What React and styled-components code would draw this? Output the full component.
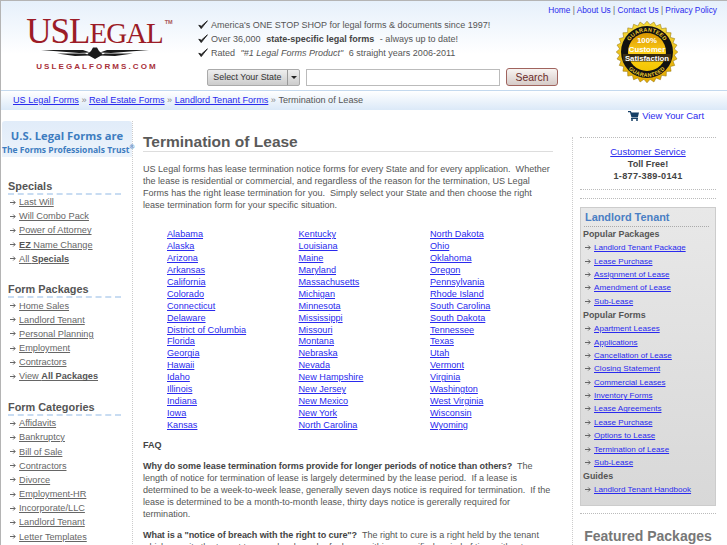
import React from 'react';
import styled, { createGlobalStyle } from 'styled-components';

const states = [
    ['Alabama', 'Alaska', 'Arizona', 'Arkansas', 'California', 'Colorado', 'Connecticut', 'Delaware', 'District of Columbia', 'Florida', 'Georgia', 'Hawaii', 'Idaho', 'Illinois', 'Indiana', 'Iowa', 'Kansas'],
    ['Kentucky', 'Louisiana', 'Maine', 'Maryland', 'Massachusetts', 'Michigan', 'Minnesota', 'Mississippi', 'Missouri', 'Montana', 'Nebraska', 'Nevada', 'New Hampshire', 'New Jersey', 'New Mexico', 'New York', 'North Carolina'],
    ['North Dakota', 'Ohio', 'Oklahoma', 'Oregon', 'Pennsylvania', 'Rhode Island', 'South Carolina', 'South Dakota', 'Tennessee', 'Texas', 'Utah', 'Vermont', 'Virginia', 'Washington', 'West Virginia', 'Wisconsin', 'Wyoming'],
];

const Arrow = () => (
    <svg width="6" height="7" viewBox="0 0 6 7">
        <path d="M0 3.5H5M3.2 1.5L5.2 3.5L3.2 5.5" fill="none" stroke="#666" strokeWidth="1" />
    </svg>
);

const Check = () => (
    <svg width="10" height="10" viewBox="0 0 10 10">
        <path d="M0.8 5.2L3.2 8.6L9.4 0.8L3.4 6.2Z" fill="#222" stroke="#222" strokeWidth="0.9" strokeLinejoin="round" />
    </svg>
);

const Eagle = () => (
    <EagleWrap>
        <svg width="108" height="12" viewBox="0 0 108 12">
            <g fill="#1a1a1a">
                <path d="M0 3H42L49 5.5L38 6Z" />
                <path d="M108 3H66L59 5.5L70 6Z" />
                <path d="M16 6.6L44 6.6L49 8.5L34 9Z" />
                <path d="M92 6.6L64 6.6L59 8.5L74 9Z" />
                <path d="M50 4L52 0.5H56L58 4L62 7.5L54 12L46 7.5Z" />
            </g>
        </svg>
    </EagleWrap>
);

const Seal = () => {
    const points = [];
    for (let i = 0; i < 56; i++) {
        const r = i % 2 === 0 ? 30.8 : 27.5;
        const a = (i / 56) * Math.PI * 2;
        points.push(`${(31 + r * Math.cos(a)).toFixed(1)},${(31 + r * Math.sin(a)).toFixed(1)}`);
    }
    return (
        <svg width="62" height="62" viewBox="0 0 62 62">
            <defs>
                <linearGradient id="gold" x1="0" y1="0" x2="0" y2="1">
                    <stop offset="0" stopColor="#f7dc3c" />
                    <stop offset="1" stopColor="#e3a800" />
                </linearGradient>
                <linearGradient id="inner" x1="0" y1="0" x2="0" y2="1">
                    <stop offset="0" stopColor="#d99400" />
                    <stop offset="0.55" stopColor="#ffd21a" />
                    <stop offset="1" stopColor="#f2c400" />
                </linearGradient>
                <path id="topArc" d="M10.5 31A20.5 20.5 0 0 1 51.5 31" />
                <path id="botArc" d="M6 31A25 25 0 0 0 56 31" />
            </defs>
            <polygon points={points.join(' ')} fill="url(#gold)" stroke="#8a6a00" strokeWidth="0.5" />
            <circle cx="31" cy="31" r="26" fill="#111" />
            <circle cx="31" cy="31" r="19" fill="url(#inner)" />
            <rect x="7" y="33" width="48" height="7.5" fill="#3a2c10" />
            <SealBand><textPath href="#topArc" startOffset="50%">GUARANTEED</textPath></SealBand>
            <SealBand><textPath href="#botArc" startOffset="50%">GUARANTEED</textPath></SealBand>
            <SealText x="31" y="22">100%</SealText>
            <SealText x="31" y="31">Customer</SealText>
            <SealText x="31" y="39.5">Satisfaction</SealText>
        </svg>
    );
};

const Cart = () => (
    <svg width="11" height="10" viewBox="0 0 11 10">
        <path d="M0 0H2.8L3.6 1.5H11L9.8 6.5H3.5L2 1.3H0Z" fill="#163f66" />
        <rect x="3" y="7" width="7" height="1" fill="#163f66" />
        <circle cx="4" cy="9" r="1" fill="#163f66" />
        <circle cx="9" cy="9" r="1" fill="#163f66" />
    </svg>
);

const SideSection = ({ title, items }) => (
    <Section>
        <SectionTitle>{title}</SectionTitle>
        {items.map((item, i) => (
            <SideItem key={i}><Arrow /><SideLink href="#">{item}</SideLink></SideItem>
        ))}
    </Section>
);

const BoxList = ({ title, items }) => (
    <>
        <BoxHeading>{title}</BoxHeading>
        {items.map(item => (
            <BoxItem key={item}><Arrow /><a href="#">{item}</a></BoxItem>
        ))}
    </>
);

const App = () => {
    return (
        <Page>
            <GlobalStyle />
            <Header>
                <Logo>
                    <LogoWord>USL<span>EGAL</span><sup>TM</sup></LogoWord>
                    <Eagle />
                    <LogoUrl>USLEGALFORMS.COM</LogoUrl>
                </Logo>
                <Pitch>
                    <Bullet><Check />America's ONE STOP SHOP for legal forms &amp; documents since 1997!</Bullet>
                    <Bullet><Check />Over 36,000&nbsp;<b>state-specific legal forms</b>&nbsp;- always up to date!</Bullet>
                    <Bullet><Check />Rated&nbsp;<i>"#1 Legal Forms Product"</i>&nbsp;6 straight years 2006-2011</Bullet>
                    <SearchRow>
                        <StateSelect>
                            <span>Select Your State</span>
                            <SelectArrow />
                        </StateSelect>
                        <SearchInput />
                        <SearchButton>Search</SearchButton>
                    </SearchRow>
                </Pitch>
                <HeaderRight>
                    <TopLinks>
                        <a href="#">Home</a> | <a href="#">About Us</a> | <a href="#">Contact Us</a> | <a href="#">Privacy Policy</a>
                    </TopLinks>
                    <SealWrap><Seal /></SealWrap>
                </HeaderRight>
            </Header>
            <Crumbs>
                <a href="#">US Legal Forms</a><Sep>»</Sep>
                <a href="#">Real Estate Forms</a><Sep>»</Sep>
                <a href="#">Landlord Tenant Forms</a><Sep>»</Sep>
                Termination of Lease
            </Crumbs>
            <CartRow><Cart /><a href="#">View Your Cart</a></CartRow>
            <Columns>
                <LeftCol>
                    <Trust>
                        <TrustTop>U.S. Legal Forms are</TrustTop>
                        <TrustBottom>The Forms Professionals Trust<sup>®</sup></TrustBottom>
                    </Trust>
                    <SideSection title="Specials" items={['Last Will', 'Will Combo Pack', 'Power of Attorney', <><b>EZ</b> Name Change</>, <>All <b>Specials</b></>]} />
                    <SideSection title="Form Packages" items={['Home Sales', 'Landlord Tenant', 'Personal Planning', 'Employment', 'Contractors', <>View <b>All Packages</b></>]} />
                    <SideSection title="Form Categories" items={['Affidavits', 'Bankruptcy', 'Bill of Sale', 'Contractors', 'Divorce', 'Employment-HR', 'Incorporate/LLC', 'Landlord Tenant', 'Letter Templates']} />
                </LeftCol>
                <Main>
                    <Title>Termination of Lease</Title>
                    <Para>
                        US Legal forms has lease termination notice forms for every State and for every application.&nbsp; Whether the lease is residential or commercial, and regardless of the reason for the termination, US Legal Forms has the right lease termination for you.&nbsp; Simply select your State and then choose the right lease termination form for your specific situation.
                    </Para>
                    <StateGrid>
                        {states.map((col, i) => (
                            <StateCol key={i}>
                                {col.map(name => <a href="#" key={name}>{name}</a>)}
                            </StateCol>
                        ))}
                    </StateGrid>
                    <Para><b>FAQ</b></Para>
                    <Para>
                        <b>Why do some lease termination forms provide for longer periods of notice than others?</b>&nbsp; The length of notice for termination of lease is largely determined by the lease period.&nbsp; If a lease is determined to be a week-to-week lease, generally seven days notice is required for termination.&nbsp; If the lease is determined to be a month-to-month lease, thirty days notice is gererally required for termination.
                    </Para>
                    <Para>
                        <b>What is a "notice of breach with the right to cure"?</b>&nbsp; The right to cure is a right held by the tenant which permits the tenant to remedy a breach of a lease within a specified period of time without
                    </Para>
                </Main>
                <RightCol>
                    <Service>
                        <a href="#">Customer Service</a>
                        <b>Toll Free!</b>
                        <Phone>1-877-389-0141</Phone>
                    </Service>
                    <Rule />
                    <LinkBox>
                        <BoxTitle>Landlord Tenant</BoxTitle>
                        <BoxList title="Popular Packages" items={['Landlord Tenant Package', 'Lease Purchase', 'Assignment of Lease', 'Amendment of Lease', 'Sub-Lease']} />
                        <BoxList title="Popular Forms" items={['Apartment Leases', 'Applications', 'Cancellation of Lease', 'Closing Statement', 'Commercial Leases', 'Inventory Forms', 'Lease Agreements', 'Lease Purchase', 'Options to Lease', 'Termination of Lease', 'Sub-Lease']} />
                        <BoxList title="Guides" items={['Landlord Tenant Handbook']} />
                    </LinkBox>
                    <Rule />
                    <Featured>Featured Packages</Featured>
                </RightCol>
            </Columns>
        </Page>
    );
};

export default App;

const GlobalStyle = createGlobalStyle`
    html, body {
        margin: 0;
        height: 545px;
        overflow: hidden;
        background: #fff;
    }
    body {
        font-family: 'Liberation Sans', Arial, sans-serif;
        font-size: 9.15px;
        color: #555;
    }
    a {
        color: #2a2aee;
    }
`

const Page = styled.div`
    width: 727px;
    height: 545px;
    overflow: hidden;
    box-sizing: border-box;
    border-left: 1px solid #b4b4b4;
    border-top: 1px solid #b4b4b4;
`

const Header = styled.div`
    display: flex;
    height: 90px;
    box-sizing: border-box;
    border-bottom: 1px solid #c4d9ee;
    background: linear-gradient(#e6f0fb, #fff 60%);
`

const Logo = styled.div`
    width: 197px;
    flex: none;
    display: flex;
    flex-direction: column;
    align-items: center;
    padding: 15px 5px 0 0;
    box-sizing: border-box;
`

const LogoWord = styled.div`
    font-family: 'Liberation Serif', serif;
    font-size: 35px;
    line-height: 31px;
    color: #9c1c27;
    letter-spacing: -1px;
    white-space: nowrap;
    margin: 0 0 -2px 5px;
    span {
        font-size: 29px;
    }
    sup {
        font-family: 'Liberation Sans', sans-serif;
        font-size: 5.5px;
        letter-spacing: 0;
        font-weight: bold;
        line-height: 0;
        vertical-align: 19px;
        color: #a55;
        margin-left: 2px;
    }
`

const EagleWrap = styled.div`
    height: 12px;
    margin-right: 4px;
`

const LogoUrl = styled.div`
    font-size: 8px;
    font-weight: bold;
    line-height: 10px;
    letter-spacing: 2.1px;
    color: #a8303a;
    margin-top: 3px;
    white-space: nowrap;
`

const Pitch = styled.div`
    width: 360px;
    flex: none;
    padding-top: 17px;
    box-sizing: border-box;
`

const Bullet = styled.div`
    display: flex;
    align-items: center;
    height: 14px;
    gap: 3px;
    font-size: 9.02px;
    white-space: nowrap;
    svg {
        flex: none;
    }
    b {
        color: #444;
    }
`

const SearchRow = styled.div`
    display: flex;
    gap: 6px;
    margin-top: 9px;
    margin-left: 9px;
    align-items: flex-start;
`

const StateSelect = styled.div`
    width: 93px;
    height: 17px;
    box-sizing: border-box;
    display: flex;
    align-items: stretch;
    border: 1px solid #aaa;
    border-radius: 2px;
    background: linear-gradient(#eee, #ccc);
    color: #333;
    font-size: 8.9px;
    white-space: nowrap;
    span {
        flex: 1;
        line-height: 15px;
        text-align: center;
        border-right: 1px solid #999;
    }
`

const SelectArrow = styled.i`
    width: 11px;
    position: relative;
    &::after {
        content: '';
        position: absolute;
        left: 3px;
        top: 6px;
        border: 3px solid transparent;
        border-top-color: #222;
        border-bottom: 0;
    }
`

const SearchInput = styled.div`
    width: 195px;
    height: 17px;
    box-sizing: border-box;
    border: 1px solid #bbb;
    background: #fff;
`

const SearchButton = styled.button`
    width: 52px;
    height: 18px;
    margin-top: -1px;
    padding: 0;
    box-sizing: border-box;
    border: 1px solid #a0645e;
    border-radius: 3px;
    background: linear-gradient(#f8f4f2, #d6cbc8);
    color: #6a2a26;
    font-family: 'Liberation Sans', sans-serif;
    font-size: 10.4px;
`

const HeaderRight = styled.div`
    flex: 1;
    min-width: 0;
    display: flex;
    flex-direction: column;
    align-items: flex-end;
`

const TopLinks = styled.div`
    padding: 3px 10px 0 0;
    font-size: 8.3px;
    line-height: 12px;
    white-space: nowrap;
    color: #666;
    a {
        text-decoration: none;
    }
`

const SealWrap = styled.div`
    align-self: flex-start;
    margin: 5px 0 0 58px;
`

const SealBand = styled.text`
    font-size: 5.4px;
    font-weight: bold;
    fill: #f2cd2c;
    text-anchor: middle;
    letter-spacing: 0.3px;
`

const SealText = styled.text`
    font-size: 7.8px;
    font-weight: bold;
    fill: #fff;
    text-anchor: middle;
`

const Crumbs = styled.div`
    height: 19px;
    line-height: 18px;
    padding-left: 12px;
    background: linear-gradient(#fff, #dbe9f8);
    white-space: nowrap;
`

const Sep = styled.span`
    color: #888;
    margin: 0 2.5px;
`

const CartRow = styled.div`
    display: flex;
    align-items: center;
    justify-content: flex-end;
    gap: 3px;
    height: 11px;
    padding-right: 23px;
    font-size: 9.4px;
    a {
        text-decoration: none;
    }
`

const Columns = styled.div`
    display: flex;
    align-items: flex-start;
`

const LeftCol = styled.div`
    width: 132px;
    flex: none;
    box-sizing: border-box;
    min-height: 424px;
    border-right: 1px dotted #ccc;
`

const Trust = styled.div`
    height: 36px;
    box-sizing: border-box;
    margin: 0 0 22px 1px;
    padding-top: 8px;
    text-align: center;
    background: linear-gradient(#e1ecf9, #ecf3fb);
    border-radius: 3px 3px 0 0;
    color: #3d7cc0;
    font-family: 'Open Sans', sans-serif;
    font-weight: bold;
    white-space: nowrap;
`

const TrustTop = styled.div`
    font-size: 11.2px;
    line-height: 14px;
`

const TrustBottom = styled.div`
    font-size: 8.5px;
    line-height: 13px;
    sup {
        font-size: 6px;
        line-height: 0;
    }
`

const Section = styled.div`
    margin: 0 0 16.5px 7px;
`

const SectionTitle = styled.div`
    width: 113px;
    font-size: 10.9px;
    font-weight: bold;
    line-height: 14px;
    color: #555;
    border-bottom: 2px dashed #c8dcf2;
`

const SideItem = styled.div`
    display: flex;
    align-items: center;
    gap: 3px;
    height: 14.2px;
    padding-left: 2px;
`

const SideLink = styled.a`
    color: #666;
    font-size: 9.2px;
    white-space: nowrap;
    b {
        color: #555;
    }
`

const Main = styled.div`
    width: 410px;
    flex: none;
    margin: 12px 0 0 10px;
    line-height: 12px;
`

const Title = styled.h1`
    margin: 0 0 11px;
    font-size: 15.5px;
    line-height: 18px;
    color: #5a5a5a;
    border-bottom: 1px solid #ddd;
`

const Para = styled.p`
    margin: 0 0 9px;
    font-size: 9.05px;
    b {
        color: #444;
        letter-spacing: -0.08px;
    }
`

const StateGrid = styled.div`
    display: flex;
    padding: 9px 0 7px 24px;
`

const StateCol = styled.div`
    width: 131.5px;
    flex: none;
    display: flex;
    flex-direction: column;
    align-items: flex-start;
    a {
        line-height: 11.94px;
        height: 11.94px;
    }
`

const RightCol = styled.div`
    width: 154px;
    flex: none;
    box-sizing: border-box;
    margin: 16px 0 0 19px;
    padding: 0 10px 0 7px;
    min-height: 420px;
    border-left: 1px dotted #ccc;
`

const Service = styled.div`
    display: flex;
    flex-direction: column;
    align-items: center;
    line-height: 12px;
    padding: 8px 0 7px;
    margin-bottom: 8px;
    border-top: 1px dotted #bbb;
    border-bottom: 1px dotted #bbb;
    b {
        color: #444;
    }
    a {
        font-size: 9.5px;
    }
`

const Phone = styled.b`
    letter-spacing: 0.3px;
`

const Rule = styled.div`
    border-top: 1px dotted #bbb;
    margin-bottom: 8px;
`

const LinkBox = styled.div`
    box-sizing: border-box;
    width: 136px;
    margin-bottom: 7px;
    padding: 2px 0 8px;
    border: 1px solid #ccc;
    background: linear-gradient(#e8e8e8, #d8d8d8);
    font-size: 8.1px;
`

const BoxTitle = styled.div`
    margin: 0 6px 0 3px;
    padding: 0 0 1px 1px;
    font-size: 10.9px;
    font-weight: bold;
    line-height: 15px;
    color: #4a7fc4;
    border-bottom: 1px dotted #aaa;
`

const BoxHeading = styled.div`
    font-size: 8.9px;
    font-weight: bold;
    line-height: 14px;
    color: #555;
    padding-left: 2px;
`

const BoxItem = styled.div`
    display: flex;
    align-items: center;
    gap: 3px;
    height: 13.4px;
    padding-left: 4px;
    white-space: nowrap;
`

const Featured = styled.div`
    font-size: 14px;
    font-weight: bold;
    line-height: 17px;
    color: #777;
    text-align: center;
    white-space: nowrap;
    padding-top: 6px;
    border-bottom: 1px solid #ccc;
`
